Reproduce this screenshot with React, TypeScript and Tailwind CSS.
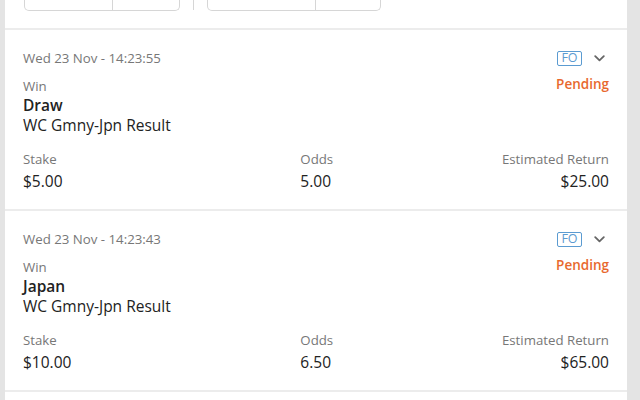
import React from "react";

type Bet = {
  placed: string;
  type: string;
  selection: string;
  market: string;
  stake: string;
  odds: string;
  ret: string;
};

const bets: Bet[] = [
  {
    placed: "Wed 23 Nov - 14:23:55",
    type: "Win",
    selection: "Draw",
    market: "WC Gmny-Jpn Result",
    stake: "$5.00",
    odds: "5.00",
    ret: "$25.00",
  },
  {
    placed: "Wed 23 Nov - 14:23:43",
    type: "Win",
    selection: "Japan",
    market: "WC Gmny-Jpn Result",
    stake: "$10.00",
    odds: "6.50",
    ret: "$65.00",
  },
];

const Chevron = () => (
  <svg width="11" height="7" viewBox="0 0 11 7" fill="none" className="text-[#666]">
    <path d="M1.2 1.2L5.5 5.4L9.8 1.2" stroke="currentColor" strokeWidth="1.8" strokeLinecap="round" strokeLinejoin="round" />
  </svg>
);

const BetCard = ({ bet }: { bet: Bet }) => (
  <div className="border-b-2 border-[#ececec] px-[18px] pt-[18px] pb-[18px]">
    <div className="flex items-start justify-between">
      <div className="flex flex-col">
        <div className="text-[13.25px] leading-[20px] text-[#777]">{bet.placed}</div>
        <div className="mt-[8px] text-[13.25px] leading-[20px] text-[#777]">{bet.type}</div>
        <div className="text-[15.5px] font-semibold leading-[19px] text-[#222]">{bet.selection}</div>
        <div className="text-[15.5px] leading-[20px] text-[#222]">{bet.market}</div>
      </div>
      <div className="flex flex-col items-end">
        <div className="flex h-[20px] items-center gap-[12px] pr-[4px]">
          <span className="flex h-[15px] w-[25px] items-center justify-center rounded-[2px] border border-[#5b9bd1] text-[12.5px] leading-none text-[#5b9bd1]">
            FO
          </span>
          <Chevron />
        </div>
        <div className="mt-[6px] text-[13.5px] font-semibold leading-[20px] text-[#e8692e]">Pending</div>
      </div>
    </div>
    <div className="mt-[14px] grid grid-cols-3">
      <div className="flex flex-col">
        <span className="text-[13.25px] leading-[20px] text-[#777]">Stake</span>
        <span className="mt-[2px] text-[15.5px] leading-[20px] text-[#222]">{bet.stake}</span>
      </div>
      <div className="flex flex-col pl-[82px]">
        <span className="text-[13.25px] leading-[20px] text-[#777]">Odds</span>
        <span className="mt-[2px] text-[15.5px] leading-[20px] text-[#222]">{bet.odds}</span>
      </div>
      <div className="flex flex-col items-end">
        <span className="text-[13.25px] leading-[20px] text-[#777]">Estimated Return</span>
        <span className="mt-[2px] text-[15.5px] leading-[20px] text-[#222]">{bet.ret}</span>
      </div>
    </div>
  </div>
);

export default function App() {
  return (
    <div
      className="flex h-[400px] w-[640px] overflow-hidden bg-[#e4e4e4]"
      style={{ fontFamily: '"Open Sans", sans-serif' }}
    >
      <div className="ml-[5px] flex w-[622px] flex-col bg-white">
        <div className="flex h-[30px] items-start border-b-2 border-[#ececec] pl-[19px]">
          <div className="flex h-[11px] w-[156px] rounded-b-[5px] border border-t-0 border-[#d6d6d6]">
            <div className="w-[88px] border-r border-[#d6d6d6]" />
          </div>
          <div className="ml-[13px] h-[10px] w-px bg-[#d6d6d6]" />
          <div className="ml-[13px] flex h-[11px] w-[174px] rounded-b-[5px] border border-t-0 border-[#d6d6d6]">
            <div className="w-[108px] border-r border-[#d6d6d6]" />
          </div>
        </div>
        {bets.map((bet, idx) => (
          <BetCard key={`${bet.placed}-${idx}`} bet={bet} />
        ))}
      </div>
    </div>
  );
}
